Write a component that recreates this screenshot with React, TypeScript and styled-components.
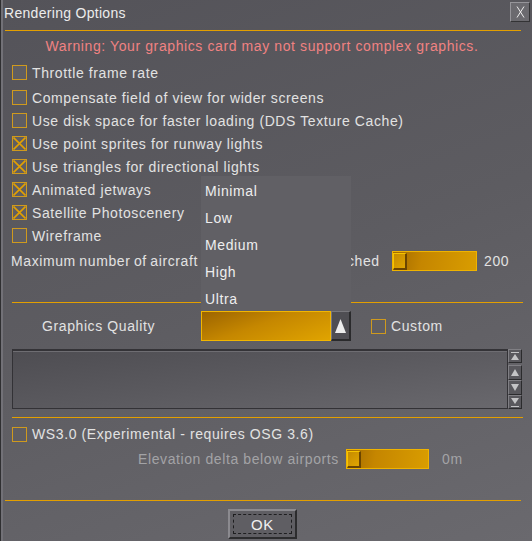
import React from "react";
import styled, { createGlobalStyle } from "styled-components";

const ORANGE = "#e39f00";
const BOX_ORANGE = "#cf9a1e";

const GlobalStyle = createGlobalStyle`
  html, body { margin: 0; padding: 0; background: #5a595e; }
  body { font-family: "Liberation Sans", Arial, sans-serif; }
`;

const Window = styled.div`
  position: relative;
  width: 532px;
  height: 541px;
  box-sizing: border-box;
  overflow: hidden;
  display: flex;
  flex-direction: column;
  background: linear-gradient(160deg, #545359 0%, #5d5c61 50%, #6a696e 100%);
  box-shadow: inset 1px 0 0 #2f2f31, inset 3px 0 0 #727177;
  color: #e2e2e2;
  font-family: "Liberation Sans", Arial, sans-serif;
  font-size: 14px;
  letter-spacing: 0.6px;
`;

const TitleBar = styled.div`
  height: 30px;
  flex-shrink: 0;
  display: flex;
  justify-content: space-between;
  align-items: flex-start;
  padding: 0 2px 0 4px;
`;

const Title = styled.span`
  margin-top: 5px;
  line-height: 16px;
  font-size: 14px;
  letter-spacing: 0.3px;
  color: #ececec;
`;

const CloseButton = styled.div`
  margin-top: 2px;
  width: 20px;
  height: 20px;
  box-sizing: border-box;
  background: #6b6a6f;
  border: 1px solid;
  border-color: #96959a #333335 #333335 #96959a;
  display: flex;
  align-items: center;
  justify-content: center;
`;

const Divider = styled.div<{ $left: number; $right: number; $top?: number }>`
  flex-shrink: 0;
  height: 1px;
  background: ${ORANGE};
  margin: ${(p) => p.$top ?? 0}px ${(p) => p.$right}px 0 ${(p) => p.$left}px;
`;

const Warning = styled.div`
  height: 30px;
  line-height: 30px;
  text-align: center;
  padding-right: 8px;
  color: #f08282;
  flex-shrink: 0;
`;

const CheckList = styled.div`
  display: flex;
  flex-direction: column;
  flex-shrink: 0;
`;

const CheckRow = styled.label<{ $gapAfter?: number; $top?: number; $h?: number }>`
  display: flex;
  align-items: center;
  gap: 5px;
  height: ${(p) => p.$h ?? 23}px;
  padding-left: 12px;
  margin-top: ${(p) => p.$top ?? 0}px;
  margin-bottom: ${(p) => p.$gapAfter ?? 0}px;
  flex-shrink: 0;
`;

const Box = styled.span`
  width: 15px;
  height: 15px;
  box-sizing: border-box;
  border: 1px solid ${BOX_ORANGE};
  background: #5f5e63;
  display: flex;
  flex-shrink: 0;
`;

const CheckText = styled.span`
  white-space: nowrap;
`;

function Check({ checked }: { checked?: boolean }) {
  return (
    <Box>
      {checked && (
        <svg width="13" height="13" viewBox="0 0 13 13">
          <path d="M0.5 0.5 L12.5 12.5 M12.5 0.5 L0.5 12.5" stroke="#e3a000" strokeWidth="1.6" />
        </svg>
      )}
    </Box>
  );
}

const SliderRow = styled.div`
  display: flex;
  align-items: center;
  height: 28px;
  padding-left: 11px;
  flex-shrink: 0;
`;

const RowLabel = styled.span<{ $w: number; $dim?: boolean; $ws?: number }>`
  width: ${(p) => p.$w}px;
  flex-shrink: 0;
  white-space: nowrap;
  overflow: hidden;
  word-spacing: ${(p) => p.$ws ?? 0}px;
  color: ${(p) => (p.$dim ? "#a3a3a6" : "inherit")};
`;

const Track = styled.div<{ $w: number }>`
  width: ${(p) => p.$w}px;
  height: 20px;
  box-sizing: border-box;
  flex-shrink: 0;
  border: 1px solid #efb300;
  background: linear-gradient(100deg, #a26a00 0%, #c58600 35%, #d99d00 100%);
  display: flex;
  align-items: center;
`;

const Thumb = styled.div`
  width: 14px;
  height: 17px;
  box-sizing: border-box;
  background: linear-gradient(135deg, #c58b00, #e0a500);
  border-top: 1px solid #f6c400;
  border-left: 1px solid #f6c400;
  border-right: 2px solid #6b4500;
  border-bottom: 2px solid #6b4500;
`;

const Value = styled.span<{ $ml: number; $dim?: boolean }>`
  margin-left: ${(p) => p.$ml}px;
  color: ${(p) => (p.$dim ? "#a3a3a6" : "inherit")};
`;

function Slider({ w }: { w: number }) {
  return (
    <Track $w={w}>
      <Thumb />
    </Track>
  );
}

const Spacer = styled.div<{ $h: number }>`
  height: ${(p) => p.$h}px;
  flex-shrink: 0;
`;

const QualityRow = styled.div`
  display: flex;
  align-items: center;
  height: 30px;
  margin-top: 8px;
  padding-left: 42px;
  flex-shrink: 0;
`;

const ComboField = styled.div`
  width: 130px;
  height: 30px;
  box-sizing: border-box;
  border: 1px solid #f2b600;
  background: linear-gradient(160deg, #9c6400 0%, #c58700 45%, #e0a400 100%);
`;

const ArrowButton = styled.div`
  width: 20px;
  height: 30px;
  box-sizing: border-box;
  background: #4f4e53;
  border-top: 1px solid #78777c;
  border-left: 1px solid #78777c;
  border-right: 2px solid #2a2a2c;
  border-bottom: 2px solid #2a2a2c;
  display: flex;
  align-items: center;
  justify-content: center;
`;

const CustomCheck = styled.label`
  display: flex;
  align-items: center;
  gap: 5px;
  margin-left: 20px;
`;

const TextRow = styled.div`
  display: flex;
  height: 60px;
  margin-top: 8px;
  padding-left: 12px;
  flex-shrink: 0;
`;

const TextBox = styled.div`
  width: 496px;
  height: 60px;
  box-sizing: border-box;
  border: 1px solid #333236;
  border-top: 2px solid #343337;
  box-shadow: inset 0 1px 0 #6e6d72;
  background: linear-gradient(172deg, #4e4d52 0%, #5b5a5f 50%, #69686d 100%);
`;

const ScrollColumn = styled.div`
  width: 14px;
  display: flex;
  flex-direction: column;
`;

const ScrollButton = styled.div<{ $h: number; $mt?: number }>`
  height: ${(p) => p.$h}px;
  margin-top: ${(p) => p.$mt ?? 0}px;
  box-sizing: border-box;
  background: #59585d;
  border-top: 1px solid #807f84;
  border-left: 1px solid #807f84;
  border-right: 1px solid #2b2b2d;
  border-bottom: 1px solid #2b2b2d;
  display: flex;
  align-items: center;
  justify-content: center;
`;

const ElevationRow = styled.div`
  display: flex;
  align-items: center;
  height: 20px;
  margin-top: 4px;
  padding-left: 138px;
  flex-shrink: 0;
`;

const OkButton = styled.div`
  margin: 8px 0 0 228px;
  width: 69px;
  height: 30px;
  box-sizing: border-box;
  flex-shrink: 0;
  background: #5f5e63;
  border: 2px solid;
  border-color: #8b8a8f #2c2c2e #2c2c2e #8b8a8f;
  padding: 3px;
  display: flex;
`;

const OkInner = styled.div`
  flex: 1;
  border: 1px dashed #1e1e20;
  display: flex;
  align-items: center;
  justify-content: center;
  font-size: 15px;
  color: #f0f0f0;
`;

const DropList = styled.div`
  position: absolute;
  left: 201px;
  top: 176px;
  width: 150px;
  height: 135px;
  box-sizing: border-box;
  padding-top: 2px;
  background: #616065;
  display: flex;
  flex-direction: column;
`;

const DropItem = styled.div`
  height: 27px;
  line-height: 27px;
  padding-left: 4px;
  color: #eeeeee;
`;

const tri = "#c4c4c6";

export default function App() {
  return (
    <>
      <GlobalStyle />
      <Window>
        <TitleBar>
          <Title>Rendering Options</Title>
          <CloseButton>
            <svg width="9" height="12" viewBox="0 0 9 12">
              <path d="M1 0.5 L8 11.5 M8 0.5 L1 11.5" stroke="#efefef" strokeWidth="1" />
            </svg>
          </CloseButton>
        </TitleBar>
        <Divider $left={5} $right={11} />
        <Warning>Warning: Your graphics card may not support complex graphics.</Warning>
        <CheckList>
          <CheckRow $gapAfter={2}>
            <Check />
            <CheckText>Throttle frame rate</CheckText>
          </CheckRow>
          <CheckRow>
            <Check />
            <CheckText>Compensate field of view for wider screens</CheckText>
          </CheckRow>
          <CheckRow>
            <Check />
            <CheckText>Use disk space for faster loading (DDS Texture Cache)</CheckText>
          </CheckRow>
          <CheckRow>
            <Check checked />
            <CheckText>Use point sprites for runway lights</CheckText>
          </CheckRow>
          <CheckRow>
            <Check checked />
            <CheckText>Use triangles for directional lights</CheckText>
          </CheckRow>
          <CheckRow>
            <Check checked />
            <CheckText>Animated jetways</CheckText>
          </CheckRow>
          <CheckRow>
            <Check checked />
            <CheckText>Satellite Photoscenery</CheckText>
          </CheckRow>
          <CheckRow>
            <Check />
            <CheckText>Wireframe</CheckText>
          </CheckRow>
        </CheckList>
        <SliderRow>
          <RowLabel $w={381} $ws={-1}>
            Maximum number of aircraft models that can be cached
          </RowLabel>
          <Slider w={85} />
          <Value $ml={7}>200</Value>
        </SliderRow>
        <Spacer $h={27} />
        <Divider $left={12} $right={9} />
        <QualityRow>
          <RowLabel $w={159}>Graphics Quality</RowLabel>
          <ComboField />
          <ArrowButton>
            <svg width="11" height="14" viewBox="0 0 11 14">
              <path d="M5.5 0 L11 14 L0 14 Z" fill="#ececec" />
            </svg>
          </ArrowButton>
          <CustomCheck>
            <Check />
            <CheckText>Custom</CheckText>
          </CustomCheck>
        </QualityRow>
        <TextRow>
          <TextBox />
          <ScrollColumn>
            <ScrollButton $h={14}>
              <svg width="8" height="9" viewBox="0 0 8 9">
                <rect x="0" y="0" width="8" height="1" fill={tri} />
                <path d="M4 2 L8 8 L0 8 Z" fill={tri} />
              </svg>
            </ScrollButton>
            <ScrollButton $h={15} $mt={2}>
              <svg width="8" height="7" viewBox="0 0 8 7">
                <path d="M4 0 L8 7 L0 7 Z" fill={tri} />
              </svg>
            </ScrollButton>
            <ScrollButton $h={15}>
              <svg width="8" height="7" viewBox="0 0 8 7">
                <path d="M0 0 L8 0 L4 7 Z" fill={tri} />
              </svg>
            </ScrollButton>
            <ScrollButton $h={14}>
              <svg width="8" height="9" viewBox="0 0 8 9">
                <path d="M0 0 L8 0 L4 6 Z" fill={tri} />
                <rect x="0" y="8" width="8" height="1" fill={tri} />
              </svg>
            </ScrollButton>
          </ScrollColumn>
        </TextRow>
        <Divider $left={12} $right={9} $top={8} />
        <CheckRow $top={5} $h={22}>
          <Check />
          <CheckText>WS3.0 (Experimental - requires OSG 3.6)</CheckText>
        </CheckRow>
        <ElevationRow>
          <RowLabel $w={208} $dim>
            Elevation delta below airports
          </RowLabel>
          <Slider w={83} />
          <Value $ml={13} $dim>
            0m
          </Value>
        </ElevationRow>
        <Divider $left={5} $right={11} $top={31} />
        <OkButton>
          <OkInner>OK</OkInner>
        </OkButton>
        <DropList>
          {["Minimal", "Low", "Medium", "High", "Ultra"].map((q) => (
            <DropItem key={q}>{q}</DropItem>
          ))}
        </DropList>
      </Window>
    </>
  );
}
